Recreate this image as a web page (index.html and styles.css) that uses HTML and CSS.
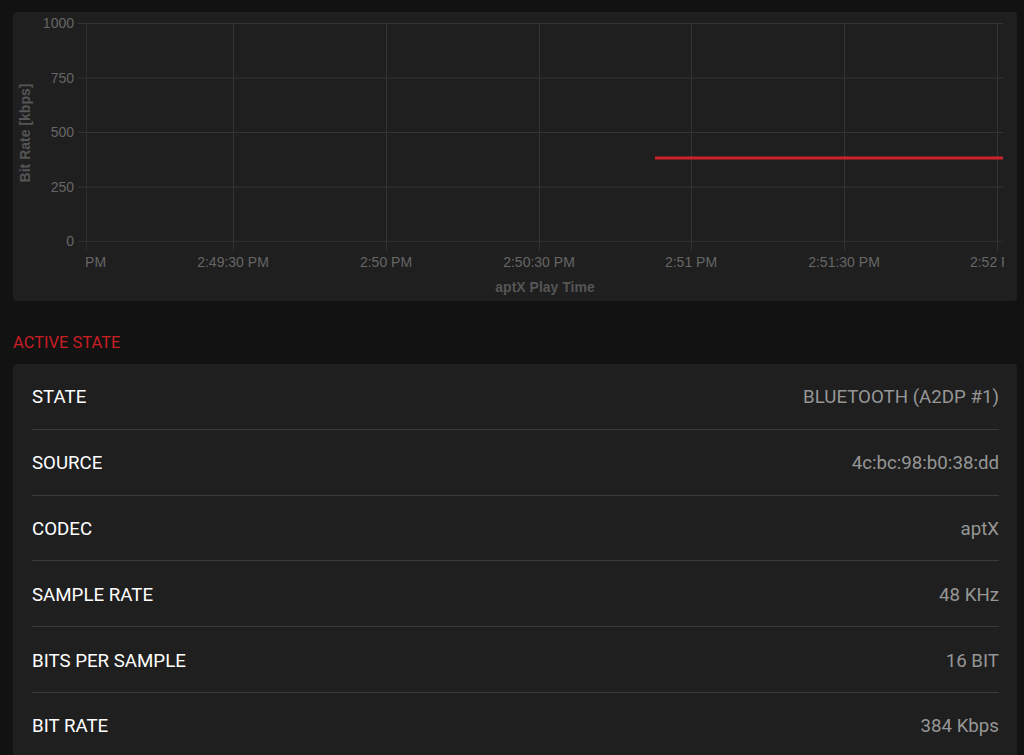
FILE: index.html
```html
<!DOCTYPE html>
<html>
<head>
<meta charset="utf-8">
<link rel="stylesheet" href="styles.css">
</head>
<body>
<div class="page">
  <div class="card chart-card">
    <svg class="chart" width="1004" height="289" viewBox="0 0 1004 289">
      <defs>
        <clipPath id="plotx"><rect x="73" y="0" width="918" height="289"/></clipPath>
      </defs>
      <g class="grid">
        <line x1="65" y1="11.5" x2="990" y2="11.5"/>
        <line x1="65" y1="66" x2="990" y2="66"/>
        <line x1="65" y1="120.5" x2="990" y2="120.5"/>
        <line x1="65" y1="175" x2="990" y2="175"/>
        <line x1="220.5" y1="11" x2="220.5" y2="239"/>
        <line x1="373.5" y1="11" x2="373.5" y2="239"/>
        <line x1="526.5" y1="11" x2="526.5" y2="239"/>
        <line x1="678.5" y1="11" x2="678.5" y2="239"/>
        <line x1="831.5" y1="11" x2="831.5" y2="239"/>
        <line x1="984.5" y1="11" x2="984.5" y2="239"/>
      </g>
      <g class="axis">
        <line x1="65" y1="229.5" x2="990" y2="229.5"/>
        <line x1="73.5" y1="11" x2="73.5" y2="239"/>
      </g>
      <g class="ticks-y">
        <text x="61" y="16">1000</text>
        <text x="61" y="71">750</text>
        <text x="61" y="125">500</text>
        <text x="61" y="180">250</text>
        <text x="61" y="234">0</text>
      </g>
      <g class="ticks-x" clip-path="url(#plotx)">
        <text x="67" y="255">2:49 PM</text>
        <text x="220" y="255">2:49:30 PM</text>
        <text x="373" y="255">2:50 PM</text>
        <text x="526" y="255">2:50:30 PM</text>
        <text x="678" y="255">2:51 PM</text>
        <text x="831" y="255">2:51:30 PM</text>
        <text x="983" y="255">2:52 PM</text>
      </g>
      <text class="title-y" transform="translate(17 121) rotate(-90)">Bit Rate [kbps]</text>
      <text class="title-x" x="532" y="280">aptX Play Time</text>
      <line class="series" x1="642" y1="146" x2="990" y2="146"/>
    </svg>
  </div>

  <h2 class="section-title">ACTIVE STATE</h2>

  <div class="card list-card">
    <div class="row"><span class="label">STATE</span><span class="value">BLUETOOTH (A2DP #1)</span></div>
    <div class="row"><span class="label">SOURCE</span><span class="value">4c:bc:98:b0:38:dd</span></div>
    <div class="row"><span class="label">CODEC</span><span class="value">aptX</span></div>
    <div class="row"><span class="label">SAMPLE RATE</span><span class="value">48 KHz</span></div>
    <div class="row"><span class="label">BITS PER SAMPLE</span><span class="value">16 BIT</span></div>
    <div class="row"><span class="label">BIT RATE</span><span class="value">384 Kbps</span></div>
  </div>
</div>
</body>
</html>
```

FILE: styles.css
```css
html, body {
  margin: 0;
  padding: 0;
  background: #121212;
  overflow: hidden;
}

body {
  font-family: Roboto, "Liberation Sans", Arial, sans-serif;
  color: #ffffff;
}

.page {
  padding: 12px 7px 0 13px;
}

.card {
  background: #1f1f1f;
  border-radius: 4px;
}

.chart-card {
  height: 289px;
}

.chart {
  display: block;
}

.chart text {
  font-family: "Liberation Sans", Arial, sans-serif;
}

.grid line {
  stroke: #343434;
  stroke-width: 1;
}

.axis line {
  stroke: #2e2e2e;
  stroke-width: 1;
}

.ticks-y text {
  fill: #666666;
  font-size: 14px;
  text-anchor: end;
}

.ticks-x text {
  fill: #666666;
  font-size: 14px;
  text-anchor: middle;
}

.title-y {
  fill: #555555;
  font-size: 14px;
  font-weight: bold;
  text-anchor: middle;
}

.title-x {
  fill: #555555;
  font-size: 14px;
  font-weight: bold;
  text-anchor: middle;
}

.series {
  stroke: #cc2229;
  stroke-width: 3;
}

.section-title {
  margin: 32px 0 12px 0;
  font-size: 16.5px;
  font-weight: 400;
  line-height: 19px;
  color: #c81e24;
}

.list-card {
  padding: 0 18px 0 19px;
}

.row {
  box-sizing: border-box;
  display: flex;
  align-items: center;
  justify-content: space-between;
  height: 65.8px;
  padding-top: 2px;
  border-bottom: 1px solid #3a3a3a;
  font-size: 18.7px;
}

.label {
  color: #ffffff;
}

.value {
  color: #969696;
}
```
